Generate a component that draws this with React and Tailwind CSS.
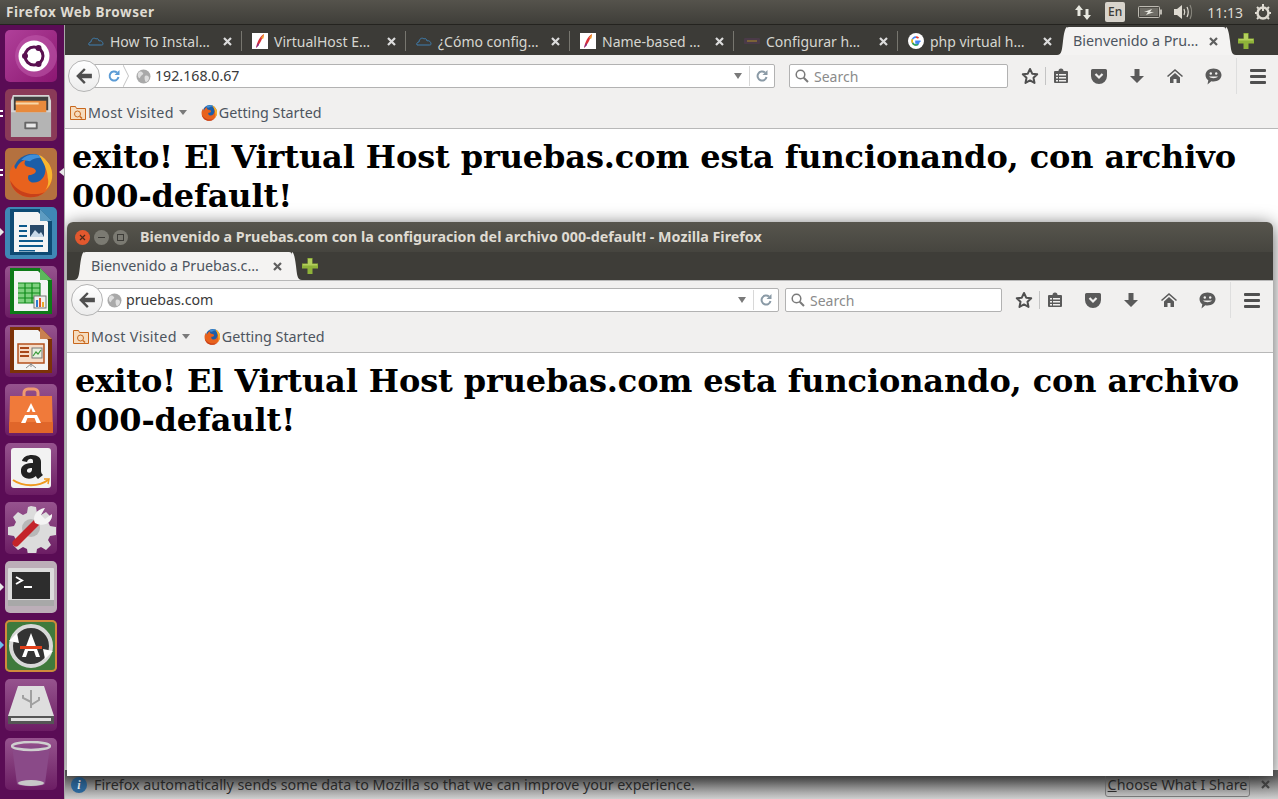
const backTabs = [
  { title: "How To Instal…", icon: "cloud" },
  { title: "VirtualHost E…", icon: "feather" },
  { title: "¿Cómo config…", icon: "cloud" },
  { title: "Name-based …", icon: "feather" },
  { title: "Configurar h…", icon: "dark" },
  { title: "php virtual h…", icon: "google" },
];

function CloseX({ color = "#dcdcdc" }) {
  return (
    <svg width="9" height="9" viewBox="0 0 9 9" className="shrink-0">
      <path d="M1 1l7 7M8 1L1 8" stroke={color} strokeWidth="2.2" />
    </svg>
  );
}

function TabIcon({ type }) {
  if (type === "cloud") {
    return (
      <svg width="16" height="16" viewBox="0 0 16 16" fill="none" stroke="#3f7fb0" strokeWidth="1">
        <path d="M1 12c-1-2 1-3 2-3 0-3 3-5 5-3 1-1 3 0 3 2 2-1 4 1 4 3 0 1-1 1-2 1H2z" />
      </svg>
    );
  }
  if (type === "feather") {
    return (
      <svg width="16" height="16" viewBox="0 0 16 16">
        <rect width="16" height="16" fill="#fff" />
        <path d="M12 1C8 3 5 9 4 15c3-3 6-8 8-14z" fill="#d8303a" />
        <path d="M12 1c-1 1-2 2-3 4l2 1c1-2 1-3 1-5z" fill="#f09a30" />
        <path d="M6 10l-2 5 3-3z" fill="#7a2a90" />
      </svg>
    );
  }
  if (type === "google") {
    return (
      <svg width="16" height="16" viewBox="0 0 16 16">
        <circle cx="8" cy="8" r="8" fill="#fff" />
        <path d="M12.6 8.2H8v1.7h2.7c-.3 1.2-1.4 2-2.7 2a3.9 3.9 0 010-7.8" fill="none" stroke="#4285f4" strokeWidth="1.6" />
        <path d="M8 4.1c1 0 1.8.3 2.5 1" fill="none" stroke="#ea4335" strokeWidth="1.6" />
        <path d="M4.5 6.2a3.9 3.9 0 000 3.6" fill="none" stroke="#fbbc05" strokeWidth="1.6" />
        <path d="M4.6 10a3.9 3.9 0 005.6 1.4" fill="none" stroke="#34a853" strokeWidth="1.6" />
      </svg>
    );
  }
  return (
    <svg width="16" height="16" viewBox="0 0 16 16">
      <rect x="0" y="5" width="16" height="6" rx="1" fill="#4a3a48" />
      <rect x="3" y="7" width="10" height="2" fill="#7a6238" />
    </svg>
  );
}

function PlusIcon() {
  return (
    <svg width="16" height="16" viewBox="0 0 16 16">
      <path d="M5.5 0h5v5.5H16v5h-5.500V16h-5v-5.500H0v-5h5.500z" fill="#8fb339" />
      <path d="M6 1h4v5H6zM1 6h14v1.500H1z" fill="#b4cf5d" />
    </svg>
  );
}

function FirefoxIcon({ size = 16 }) {
  return (
    <svg width={size} height={size} viewBox="0 0 32 32" className="shrink-0">
      <circle cx="16.500" cy="15" r="13" fill="#1c5ea8" />
      <path d="M9 6c4-4 11-5 16-1-4-1-8 0-10 2z" fill="#3f8fd8" />
      <path d="M21 2.500c6 3 10 9 9 16-1 8-7 13-15 13C7 31.500 1 25 1 17c0-3 1-6 3-8.500 0 2 .5 3 1.500 4 1-3 3-5.500 6.500-6.500-1 2-1 3 0 4 2 1.500 6 .5 7 3.500 0 2-3 3-5 3-1 2 0 5 3.500 5 5 0 8-4 8-9 0-4-1.500-7.500-4.500-10.500z" fill="#e8621d" />
      <path d="M21 2.500c6 3 10 9 9 16-.5 3-2 6-4.500 8 1.500-2 2.500-5 1.500-8.500 0-4-2-9-6-15.500z" fill="#f8b62e" />
      <path d="M1.500 20c1 6 6 11 13.500 11.500 4 0 7-1 10-3.500-8 3-18 1-23.500-8z" fill="#c8401a" />
    </svg>
  );
}

function BookmarkFolderIcon() {
  return (
    <svg width="16" height="16" viewBox="0 0 16 16" fill="none" className="shrink-0">
      <path d="M.5 14.500v-13h5l1 2h9v11z" fill="#f6dcbe" stroke="#c8671d" />
      <circle cx="7.500" cy="9" r="3" stroke="#c8671d" />
      <path d="M10 11.500l2 2" stroke="#c8671d" strokeWidth="1.500" />
    </svg>
  );
}

function Star() {
  return (
    <svg width="18" height="18" viewBox="0 0 18 18" fill="none" stroke="#4f4f4f" strokeWidth="2" strokeLinejoin="round">
      <path d="M9 2l2.200 4.700 5 .6-3.700 3.500 1 5.100L9 13.400l-4.500 2.500 1-5.100L1.800 7.300l5-.6z" />
    </svg>
  );
}

function ClipboardIcon() {
  return (
    <svg width="16" height="16" viewBox="0 0 16 16">
      <path d="M2 3h3.500a2.500 2.500 0 015 0H14a1 1 0 011 1v10a1 1 0 01-1 1H2a1 1 0 01-1-1V4a1 1 0 011-1z" fill="#5a5a5a" />
      <path d="M3 6h2v1.500H3zM6 6h7v1.500H6zM3 9h2v1.500H3zM6 9h7v1.500H6zM3 12h2v1.500H3zM6 12h7v1.500H6z" fill="#f0efee" />
    </svg>
  );
}

function PocketIcon() {
  return (
    <svg width="16" height="15" viewBox="0 0 16 15">
      <path d="M1.500 0h13A1.500 1.500 0 0116 1.500V7A8 8 0 010 7V1.500A1.500 1.500 0 011.500 0z" fill="#5a5a5a" />
      <path d="M4.500 5L8 8.500 11.500 5" fill="none" stroke="#f0efee" strokeWidth="2.200" />
    </svg>
  );
}

function DownloadIcon() {
  return (
    <svg width="16" height="16" viewBox="0 0 16 16">
      <path d="M5.500 1h5v7H15l-7 7-7-7h4.500z" fill="#5a5a5a" />
    </svg>
  );
}

function HomeIcon() {
  return (
    <svg width="16" height="16" viewBox="0 0 16 16">
      <path d="M8 1L0 8l1 1 7-6 7 6 1-1z" fill="#5a5a5a" />
      <path d="M8 5l5 4.500V15H9.500v-4h-3v4H3V9.500z" fill="#5a5a5a" />
    </svg>
  );
}

function ChatIcon() {
  return (
    <svg width="17" height="17" viewBox="0 0 17 17">
      <path d="M8.500 0.500c4.500 0 8 2.800 8 6.500s-3.500 6.500-8 6.500c-.8 0-1.500-.1-2.200-.3L2.500 16.500l.8-4.300C1.500 11 .5 9.100.5 7 .5 3.300 4 .5 8.500.5z" fill="#5a5a5a" />
      <circle cx="5.800" cy="5.500" r="1.200" fill="#f0efee" />
      <circle cx="11.200" cy="5.500" r="1.200" fill="#f0efee" />
      <path d="M4 8.500c2 2.200 7 2.200 9 0z" fill="#f0efee" />
    </svg>
  );
}

function Hamburger() {
  return (
    <div className="flex w-[16px] flex-col gap-[3px]">
      <div className="h-[3px] rounded-[1px] bg-[#4f4f4f]" />
      <div className="h-[3px] rounded-[1px] bg-[#4f4f4f]" />
      <div className="h-[3px] rounded-[1px] bg-[#4f4f4f]" />
    </div>
  );
}

function Globe() {
  return (
    <svg width="15" height="15" viewBox="0 0 15 15" className="shrink-0">
      <circle cx="7.500" cy="7.500" r="7" fill="#a9a9a9" />
      <path d="M3 3c2-1 3 0 4 1s-1 2-2 3-1 3-2 2-2-4 0-6zM9 7c2-1 4 0 4 2s-2 4-3 4-2-5-1-6z" fill="#dedede" />
    </svg>
  );
}

function SmallReload({ color = "#8a9aa6" }) {
  return (
    <svg width="14" height="14" viewBox="0 0 14 14" fill="none" className="shrink-0">
      <path d="M11.500 8a4.500 4.500 0 11-1.500-4.400" stroke={color} strokeWidth="2" />
      <path d="M12.500 1v5h-5z" fill={color} />
    </svg>
  );
}

function BackArrow() {
  return (
    <svg width="18" height="18" viewBox="0 0 16 16">
      <path d="M8 1L1 8l7 7 1.500-1.500L6 10h9V6H6l3.500-3.500z" fill="#4f4f4f" />
    </svg>
  );
}

function SearchGlass() {
  return (
    <svg width="14" height="14" viewBox="0 0 14 14" fill="none" stroke="#7a7a7a" strokeWidth="1.500" className="shrink-0">
      <circle cx="5.500" cy="5.500" r="4.300" />
      <path d="M8.700 8.700L13 13" strokeWidth="2" />
    </svg>
  );
}

function NavBar({ url, showReload, searchClass, urlClass, rowClass }) {
  return (
    <div className={`flex h-[40px] items-center ${rowClass}`}>
      <div className="z-10 flex h-[32px] w-[32px] shrink-0 items-center justify-center rounded-full border border-[#b4b4b4] bg-gradient-to-b from-white to-[#ececec]">
        <BackArrow />
      </div>
      <div className={`-ml-[6px] flex h-[24px] items-center rounded-r-[2px] border border-[#b2b2b2] bg-white pr-[5px] ${urlClass}`}>
        {showReload ? (
          <div className="flex h-full w-[36px] items-center pl-[12px]">
            <SmallReload color="#5b9bd5" />
            <svg className="ml-[2px]" width="6" height="22" viewBox="0 0 6 22" fill="none" stroke="#c4c4c4">
              <path d="M0 0l5.500 11L0 22" />
            </svg>
          </div>
        ) : null}
        <div className={showReload ? "ml-[5px]" : "ml-[9px]"}>
          <Globe />
        </div>
        <span className="ml-[4px] flex-1 text-[14.2px] text-[#3a3a3a]">{url}</span>
        <div className="h-0 w-0 border-x-[4px] border-t-[6px] border-x-transparent border-t-[#7a7a7a]" />
        <div className="ml-[7px] mr-[5px] h-[20px] w-px bg-[#d8d8d8]" />
        <SmallReload />
      </div>
      <div className={`flex h-[24px] items-center rounded-[2px] border border-[#b2b2b2] bg-white pl-[5px] ${searchClass}`}>
        <SearchGlass />
        <span className="ml-[5px] text-[14px] text-[#8b8b8b]">Search</span>
      </div>
      <div className="ml-[12px] flex w-[20px] justify-center"><Star /></div>
      <div className="ml-[5px] h-[18px] w-px bg-[#c4c4c4]" />
      <div className="ml-[5px] flex w-[20px] justify-center"><ClipboardIcon /></div>
      <div className="ml-[18px] flex w-[20px] justify-center"><PocketIcon /></div>
      <div className="ml-[18px] flex w-[20px] justify-center"><DownloadIcon /></div>
      <div className="ml-[18px] flex w-[20px] justify-center"><HomeIcon /></div>
      <div className="ml-[18px] flex w-[20px] justify-center"><ChatIcon /></div>
      <div className="ml-[13px] h-[36px] w-px bg-[#dedede]" />
      <div className="ml-[13px] flex w-[16px] justify-center"><Hamburger /></div>
    </div>
  );
}

function BookmarksBar({ rowClass }) {
  return (
    <div className={`flex h-[33px] items-center border-b border-[#b8b8b8] bg-[#f1f0ef] pt-[1px] text-[14.3px] text-[#4d5560] ${rowClass}`}>
      <BookmarkFolderIcon />
      <span className="ml-[2px] tracking-[0.3px]">Most Visited</span>
      <div className="ml-[5px] h-0 w-0 border-x-[4px] border-t-[5px] border-x-transparent border-t-[#7a7a7a]" />
      <div className="ml-[14px]"><FirefoxIcon size={17} /></div>
      <span className="ml-[1px]">Getting Started</span>
    </div>
  );
}

function Heading() {
  return (
    <div className="px-2 pt-[9px] font-['DejaVu_Serif',serif] text-[32px] font-bold leading-[39px] tracking-[-0.12px] text-black">
      exito! El Virtual Host pruebas.com esta funcionando, con archivo 000-default!
    </div>
  );
}

// the flared bottom corners of the selected tab
function TabFlare({ side, color }) {
  return (
    <svg
      className={`absolute bottom-0 ${side === "left" ? "-left-[9px]" : "-right-[10px] -scale-x-100"}`}
      width="10"
      height="28"
      viewBox="0 0 10 28"
    >
      <path d="M10 0v28H0c5 0 5-6 6-14S8 1 10 0z" fill={color} />
    </svg>
  );
}

function ActiveTab({ title, widthClass }) {
  return (
    <div className={`relative flex h-[28px] items-center self-end rounded-t-[3px] bg-[#f4f3f2] text-[14.3px] text-[#4d5560] ${widthClass}`}>
      <TabFlare side="left" color="#f4f3f2" />
      <TabFlare side="right" color="#f4f3f2" />
      <span className="flex-1 whitespace-nowrap">{title}</span>
      <CloseX color="#5f5f5f" />
    </div>
  );
}

function BackWindow() {
  return (
    <div className="-ml-[1px] flex min-w-0 flex-1 flex-col">
      <div className="flex h-[30px] items-stretch bg-[#3c3b37] pl-[14px] pt-[2px]">
        {backTabs.map((tab, i) => (
          <div key={i} className="flex w-[164px] items-center pl-[10px]">
            <div className="flex w-[22px] shrink-0"><TabIcon type={tab.icon} /></div>
            <span className="flex-1 whitespace-nowrap text-[14px] text-[#d6d6d0]">{tab.title}</span>
            <CloseX />
            <div className={`ml-[9px] h-[20px] w-px ${i === 5 ? "bg-transparent" : "bg-[#77766f]"}`} />
          </div>
        ))}
        <ActiveTab title="Bienvenido a Pru…" widthClass="ml-[4px] w-[160px] pl-[7px] pr-[8px]" />
        <div className="ml-[12px] flex items-center"><PlusIcon /></div>
      </div>
      <div className="bg-[#f1f0ef] pt-[1px]">
        <NavBar
          url="192.168.0.67"
          showReload
          rowClass="pl-[4px]"
          urlClass="w-[681px]"
          searchClass="ml-[14px] w-[219px]"
        />
      </div>
      <BookmarksBar rowClass="pl-[6px]" />
      <div className="flex-1 bg-white">
        <Heading />
      </div>
      <div className="flex h-[29px] items-center bg-gradient-to-b from-[#6a6a6a] from-[20%] to-[#d0d0d0] pl-[7px] pr-[5px] text-[14.3px] text-[#2e2e2e]">
        <div className="flex h-[16px] w-[16px] items-center justify-center rounded-full bg-[#2d6a9f] font-['Liberation_Serif',serif] text-[12px] font-bold italic leading-none text-white">
          i
        </div>
        <span className="ml-[7px] flex-1">Firefox automatically sends some data to Mozilla so that we can improve your experience.</span>
        <div className="flex h-[24px] w-[145px] items-center justify-center rounded-[3px] border border-[#7a7a7a] text-[#2e2e2e]">
          <span><span className="underline">C</span>hoose What I Share</span>
        </div>
        <div className="ml-[11px] mr-[3px]"><CloseX color="#4a4a4a" /></div>
      </div>
    </div>
  );
}

function FrontWindow() {
  return (
    <div className="absolute left-[67px] top-[222px] z-0 flex h-[554px] w-[1206px] flex-col rounded-t-[6px] shadow-[0_3px_18px_rgba(0,0,0,0.65)]">
      <div className="flex h-[30px] items-center rounded-t-[6px] bg-gradient-to-b from-[#57554d] to-[#46453f] pl-[8px]">
        <div className="flex h-[15px] w-[15px] items-center justify-center rounded-full bg-[#e2582e]">
          <svg width="7" height="7" viewBox="0 0 7 7"><path d="M1 1l5 5M6 1L1 6" stroke="#4a2a1a" strokeWidth="1.200" /></svg>
        </div>
        <div className="ml-[4px] flex h-[15px] w-[15px] items-center justify-center rounded-full bg-[#7b7a72]">
          <div className="h-px w-[7px] bg-[#3c3b37]" />
        </div>
        <div className="ml-[4px] flex h-[15px] w-[15px] items-center justify-center rounded-full bg-[#7b7a72]">
          <div className="h-[7px] w-[7px] border border-[#3c3b37]" />
        </div>
        <span className="ml-[12px] whitespace-nowrap text-[14.3px] font-bold text-[#dfdbd2]">
          Bienvenido a Pruebas.com con la configuracion del archivo 000-default! - Mozilla Firefox
        </span>
      </div>
      <div className="flex h-[28px] items-stretch bg-[#3e3d38] pl-[16px]">
        <ActiveTab title="Bienvenido a Pruebas.c…" widthClass="w-[209px] pl-[8px] pr-[10px]" />
        <div className="ml-[10px] flex items-center"><PlusIcon /></div>
      </div>
      <div className="border-t border-[#b8b8b8] bg-[#f1f0ef]">
        <NavBar
          url="pruebas.com"
          rowClass="-mt-[1px] pl-[4px]"
          urlClass="w-[682px]"
          searchClass="ml-[6px] w-[217px]"
        />
      </div>
      <BookmarksBar rowClass="pl-[6px]" />
      <div className="flex-1 bg-white">
        <Heading />
      </div>
    </div>
  );
}

function Tile({ bg, children }) {
  return (
    <div className={`flex h-[52px] w-[52px] items-center justify-center overflow-hidden rounded-[5px] ${bg}`}>
      {children}
    </div>
  );
}

function DocIcon({ edge, fold, children }) {
  return (
    <svg width="46" height="48" viewBox="0 0 46 48">
      <path d="M2 0h30l12 12v34H2z" fill={edge} />
      <path d="M6 3h24l10 10v30H6z" fill="#f4f4f4" />
      <path d="M32 0l12 12H32z" fill={fold} />
      {children}
    </svg>
  );
}

function Launcher() {
  const purple = "bg-gradient-to-b from-[#96538e] to-[#6c1d64]";
  return (
    <div className="relative z-10 flex w-[65px] shrink-0 flex-col gap-[7px] overflow-hidden border-r border-[#a8a8a8] bg-[#5a0c55] pl-[5px] pt-[5px]">
      <Tile bg="bg-gradient-to-br from-[#b0409a] to-[#8c1672]">
        <svg width="52" height="52" viewBox="0 0 52 52">
          <circle cx="31" cy="26" r="21" fill="#c35fb0" opacity="0.5" />
          <circle cx="29" cy="26" r="15.500" fill="#fff" />
          <circle cx="29" cy="26" r="9" fill="none" stroke="#5a1050" strokeWidth="3" />
          <circle cx="20" cy="26" r="3" fill="#5a1050" />
          <circle cx="33.500" cy="18" r="3" fill="#5a1050" />
          <circle cx="33.500" cy="34" r="3" fill="#5a1050" />
        </svg>
      </Tile>
      <Tile bg="bg-[#8a3a58]">
        <svg width="42" height="46" viewBox="0 0 44 46">
          <path d="M3 2h38l2 6v38H1V8z" fill="#d4d4d4" />
          <path d="M1 20h42v26H1z" fill="#b4b4b4" />
          <path d="M4 4h36v14H4z" fill="#3f3f3f" />
          <path d="M6 8h32v12H6z" fill="#e88a3c" />
          <path d="M6 10h24v2H6z" fill="#f8d8a8" />
          <rect x="15" y="30" width="14" height="8" rx="1" fill="#666" />
          <rect x="17" y="32" width="10" height="4" fill="#e8e8e8" />
        </svg>
      </Tile>
      <Tile bg="bg-[#b4713f]">
        <FirefoxIcon size={47} />
      </Tile>
      <Tile bg="bg-[#3f87b5]">
        <DocIcon edge="#0e4a73" fold="#5d9cc2">
          <path d="M11 16h8v2h-8zM11 21h8v2h-8zM11 26h8v2h-8zM11 31h24v2H11zM11 36h24v2H11zM11 41h16v1.500H11z" fill="#0e5a8c" />
          <rect x="22" y="16" width="14" height="12" fill="#2a4a6a" />
          <path d="M22 28l5-7 4 4 2-2 3 5z" fill="#c9d9e8" />
        </DocIcon>
      </Tile>
      <Tile bg={purple}>
        <DocIcon edge="#0e7a18" fold="#5cb85c">
          <path d="M10 15h22v20H10z" fill="#7fd17f" />
          <path d="M10 15h22M10 20h22M10 25h22M10 30h22M10 35h22M17 15v20M24 15v20M32 15v20" stroke="#0e8a1a" strokeWidth="1.200" fill="none" />
          <rect x="26" y="28" width="12" height="12" fill="#f0f0f0" stroke="#777" />
          <path d="M28 32h2v7h-2z" fill="#2d7ad0" />
          <path d="M31 30h2v9h-2z" fill="#e0552a" />
          <path d="M34 34h2v5h-2z" fill="#e8a92a" />
        </DocIcon>
      </Tile>
      <Tile bg={purple}>
        <DocIcon edge="#7c3208" fold="#c98050">
          <rect x="10" y="17" width="26" height="19" fill="#f6dcc8" stroke="#b4501c" strokeWidth="1.500" />
          <path d="M12 20h9v2h-9zM12 24h9v2h-9zM12 28h9v2h-9z" fill="#a8481a" />
          <rect x="24" y="21" width="10" height="10" fill="#e8f0e0" stroke="#777" />
          <path d="M25 29l3-4 2 2 3-4" fill="none" stroke="#3a9a3a" strokeWidth="1.200" />
          <path d="M23 36v4M23 37l-5 4M23 37l5 4" stroke="#888" />
        </DocIcon>
      </Tile>
      <Tile bg={purple}>
        <svg width="44" height="48" viewBox="0 0 44 48">
          <path d="M15 14V7a4 4 0 014-4h6a4 4 0 014 4v7" fill="none" stroke="#f09a70" strokeWidth="3" />
          <path d="M1 10h42l1 37H0z" fill="#f07a3a" />
          <path d="M0 36h44v11H0z" fill="#e0662a" />
          <path d="M22 17l-10 20h4.500l2-5h7l2 5H32zM20 27l2-5 2 5z" fill="#fff" />
          <rect x="12" y="26" width="20" height="3" fill="#f07a3a" />
        </svg>
      </Tile>
      <Tile bg={purple}>
        <svg width="42" height="44" viewBox="0 0 42 44">
          <rect x="1" y="1" width="40" height="40" rx="3" fill="#f2f2f2" />
          <path d="M12 14c1-4 5-6 10-6 6 0 9 3 9 7v9c0 2 1 3 2 4l-5 4c-1-1-2-2-2-3-4 4-14 4-15-4s7-9 12-9v-2c0-3-5-3-6 1zm10 7c-4 0-5 1-5 3s4 3 5-1z" fill="#222" />
          <path d="M3 33c10 7 26 7 35 0" fill="none" stroke="#f09a1f" strokeWidth="2" />
          <path d="M34 32l5 0-1 5" fill="none" stroke="#f09a1f" strokeWidth="1.500" />
        </svg>
      </Tile>
      <Tile bg={purple}>
        <svg width="50" height="50" viewBox="0 0 50 50">
          <path d="M25 3l5 1 1 6 4 2 5-3 5 5-3 5 2 4 6 1v8l-6 1-2 4 3 5-5 5-5-3-4 2-1 6h-8l-1-6-4-2-5 3-5-5 3-5-2-4-6-1v-8l6-1 2-4-3-5 5-5 5 3 4-2 1-6z" fill="#dcdcdc" />
          <circle cx="25" cy="25" r="9" fill="#b8b8b8" />
          <path d="M10 40L32 18" stroke="#c4242a" strokeWidth="7" strokeLinecap="round" />
          <path d="M29 20c-3-6 1-14 10-15l-4 7 4 4 7-5c1 8-8 14-17 9z" fill="#f4f4f4" />
        </svg>
      </Tile>
      <Tile bg="bg-[#bcaeb8]">
        <svg width="46" height="38" viewBox="0 0 46 38">
          <rect x="0" y="0" width="46" height="38" rx="1" fill="#dcdcdc" />
          <rect x="0" y="32" width="46" height="6" fill="#a8a8a8" />
          <rect x="4" y="4" width="38" height="27" fill="#2d2d2d" />
          <path d="M8 9l6 3.500-6 3.500" fill="none" stroke="#fff" strokeWidth="2" />
          <path d="M16 18h8v2h-8z" fill="#fff" />
        </svg>
      </Tile>
      <Tile bg="bg-[#3f7a3c] ring-2 ring-inset ring-[#d08a3c]">
        <svg width="46" height="46" viewBox="0 0 46 46">
          <circle cx="23" cy="23" r="20" fill="#333" stroke="#d8d8d8" strokeWidth="4" />
          <path d="M23 10l-9 24h4l2-6h6l2 6h4z" fill="#fff" />
          <rect x="12" y="23" width="22" height="3" fill="#e0401a" />
          <path d="M1 18l8-8 2 10z" fill="#fff" />
          <path d="M45 28l-8 8-2-10z" fill="#fff" />
        </svg>
      </Tile>
      <Tile bg={purple}>
        <svg width="46" height="46" viewBox="0 0 46 46">
          <path d="M10 4h26l10 30H0z" fill="#dedede" />
          <path d="M0 34h46v8H0z" fill="#555" />
          <path d="M3 36h40v3H3z" fill="#e0e0e0" />
          <path d="M23 8v18M23 20l-8-4v-3M23 23l8-5v-3" fill="none" stroke="#a0a0a0" strokeWidth="2" />
        </svg>
      </Tile>
      <Tile bg={purple}>
        <svg width="40" height="46" viewBox="0 0 40 46">
          <path d="M1 5l5 38c3 3 25 3 28 0l5-38z" fill="#8a4a88" />
          <ellipse cx="20" cy="5" rx="19" ry="4" fill="none" stroke="#cfcfcf" strokeWidth="2.500" />
          <ellipse cx="20" cy="42" rx="13" ry="3" fill="#c8c8c8" />
        </svg>
      </Tile>
    </div>
  );
}

function LauncherPips() {
  return (
    <div className="pointer-events-none absolute inset-0 z-20">
      <div className="absolute left-0 top-[110px] h-[2px] w-[3px] bg-white" />
      <div className="absolute left-0 top-[115px] h-[2px] w-[3px] bg-white" />
      <div className="absolute left-0 top-[169px] h-[2px] w-[3px] bg-white" />
      <div className="absolute left-0 top-[174px] h-[2px] w-[3px] bg-white" />
      <div className="absolute left-[59px] top-[168px] h-0 w-0 border-y-[4px] border-r-[5px] border-y-transparent border-r-[#e8e8e8]" />
      <div className="absolute left-0 top-[228px] h-0 w-0 border-y-[4px] border-l-[4px] border-y-transparent border-l-[#e8e8e8]" />
      <div className="absolute left-0 top-[583px] h-0 w-0 border-y-[4px] border-l-[4px] border-y-transparent border-l-[#e8e8e8]" />
      <div className="absolute left-0 top-[641px] h-0 w-0 border-y-[4px] border-l-[4px] border-y-transparent border-l-[#6cc0f0]" />
    </div>
  );
}

function TopBar() {
  return (
    <div className="relative z-30 flex h-[25px] items-center border-b border-[#24231f] bg-gradient-to-b from-[#55534c] to-[#3f3e39] pl-[6px] text-[#dfdbd2]">
      <span className="flex-1 text-[13.500px] font-bold tracking-[0.55px]">Firefox Web Browser</span>
      <svg width="17" height="17" viewBox="0 0 17 17" fill="#e8e8e0">
        <path d="M4 1l4 5H5.500v6h-3V6H0z" />
        <path d="M12 16l-4-5h2.500V5h3v6H16z" />
      </svg>
      <div className="ml-[13px] flex h-[20px] w-[20px] items-center justify-center rounded-[2px] bg-[#d8d4cc] text-[12px] font-medium text-[#3c3b37]">En</div>
      <svg className="ml-[13px]" width="24" height="12" viewBox="0 0 24 12" fill="none">
        <rect x="0.500" y="0.500" width="21" height="11" rx="1" stroke="#bdbab2" />
        <rect x="2" y="2" width="18" height="8" fill="#6f6d66" />
        <rect x="22" y="3.500" width="2" height="5" fill="#bdbab2" />
        <path d="M14 3L6 6h4l-2 3 8-3h-4z" fill="#e8e8e0" />
      </svg>
      <svg className="ml-[12px]" width="19" height="16" viewBox="0 0 19 16" fill="none" stroke="#dfdbd2">
        <path d="M0 5h3l5-4v14l-5-4H0z" fill="#dfdbd2" stroke="none" />
        <path d="M10 5c1 2 1 4 0 6M13 3c1.500 3 1.500 7 0 10" strokeWidth="1.200" />
        <path d="M16 1c2 4 2 10 0 14" strokeWidth="1.200" stroke="#8a887f" />
      </svg>
      <span className="ml-[14px] text-[14px]">11:13</span>
      <svg className="ml-[11px] mr-[6px]" width="18" height="18" viewBox="0 0 18 18" fill="none" stroke="#dfdbd2">
        <circle cx="9" cy="10" r="5.500" strokeWidth="2.500" />
        <path d="M9 1v7" strokeWidth="2" />
        <path d="M9 2v2M3 4l1.500 1.500M15 4l-1.500 1.500M1 10h2M15 10h2M3 16l1.500-1.500M15 16l-1.500-1.500" strokeWidth="2" />
      </svg>
    </div>
  );
}

export default function App() {
  return (
    <div className="relative flex h-[799px] w-[1278px] flex-col overflow-hidden bg-white font-['Noto_Sans',sans-serif]">
      <TopBar />
      <div className="flex min-h-0 flex-1">
        <Launcher />
        <BackWindow />
      </div>
      <FrontWindow />
      <LauncherPips />
    </div>
  );
}
